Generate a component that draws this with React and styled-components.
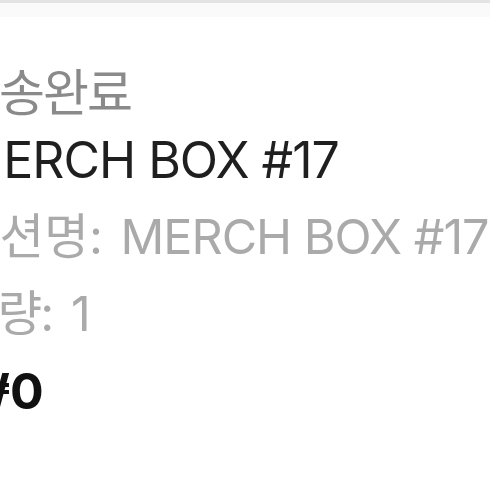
import React from "react";
import styled, { createGlobalStyle } from "styled-components";

const GlobalStyle = createGlobalStyle`
  html, body {
    margin: 0;
    padding: 0;
    background: #ffffff;
    overflow: hidden;
  }
  body {
    font-family: "Inter", "Noto Sans CJK KR", sans-serif;
  }
`;

const Page = styled.div`
  width: 490px;
  height: 490px;
  overflow: hidden;
  background: #fff;
`;

const TopBar = styled.div`
  height: 14px;
  border-top: 3px solid #e3e3e3;
  background: #fafafa;
`;

const Info = styled.div`
  display: flex;
  flex-direction: column;
  gap: 17px;
  margin-left: -45px;
  padding-top: 52px;
  white-space: nowrap;
`;

const Status = styled.div`
  font-size: 50px;
  line-height: 48px;
  color: #8a8a8a;
  margin-bottom: -4px;
`;

const Line = styled.div`
  font-size: ${(p) => p.$size || 50}px;
  font-weight: ${(p) => (p.$bold ? 700 : 400)};
  color: ${(p) => p.$color || "#222"};
  line-height: 60px;
  letter-spacing: -1px;
  padding-left: ${(p) => p.$indent || 0}px;
`;

const Ko = styled.span`
  letter-spacing: ${(p) => (p.$ls !== undefined ? p.$ls : -2)}px;
`;

const Value = styled.span`
  margin-left: ${(p) => p.$gap || 5}px;
`;

export default function App() {
  return (
    <Page>
      <GlobalStyle />
      <TopBar />
      <Info>
        <Status>
          <Ko>배송완료</Ko>
        </Status>
        <Line $color="#1f1f1f" $indent={4}>MERCH BOX #17</Line>
        <Line $size={48.5} $color="#aaaaaa">
          <Ko $ls={0}>옵션명</Ko>: <Value $gap={6}>MERCH BOX #17</Value>
        </Line>
        <Line $size={48.5} $color="#aaaaaa">
          <Ko>수량</Ko>: <Value>1</Value>
        </Line>
        <Line $size={50} $color="#111111" $bold $indent={4}>₩0</Line>
      </Info>
    </Page>
  );
}
